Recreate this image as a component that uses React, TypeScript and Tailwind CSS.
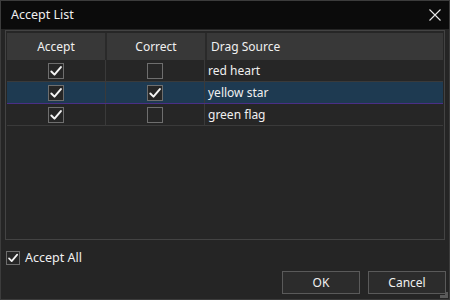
import React, { useState } from 'react';

const Check = ({ on, size = 16 }: { on: boolean; size?: number }) => (
  <span
    className="flex items-center justify-center border border-[#6e6e6e] bg-[#262626]"
    style={{ width: size, height: size }}
  >
    {on && (
      <svg width={size - 2} height={size - 2} viewBox="0 0 12 12" fill="none">
        <path d="M2 6.4 L4.7 9.1 L10.2 2.6" stroke="#f4f4f4" strokeWidth="1.7" strokeLinecap="round" strokeLinejoin="round" />
      </svg>
    )}
  </span>
);

const rows = [
  { accept: true, correct: false, name: 'red heart' },
  { accept: true, correct: true, name: 'yellow star' },
  { accept: true, correct: false, name: 'green flag' },
];

export default function App() {
  const [selected] = useState(1);

  return (
    <div className="relative w-[450px] h-[300px] flex flex-col border border-[#3c3c3c] bg-[#252525] text-[#f0f0f0] text-[12px] leading-none overflow-hidden" style={{ fontFamily: '"Noto Sans", "Open Sans", sans-serif' }}>
      {/* title bar */}
      <div className="h-[28px] bg-[#0b0b0b] flex items-center justify-between pl-[10px] pr-[8px] shrink-0">
        <span className="text-[12.5px]">Accept List</span>
        <svg width="12" height="12" viewBox="0 0 12 12">
          <path d="M0.5 0.5 L11.5 11.5 M11.5 0.5 L0.5 11.5" stroke="#e8e8e8" strokeWidth="1.1" />
        </svg>
      </div>

      <div className="flex-1 flex flex-col px-[4px] pt-[1px]">
        {/* table */}
        <div className="h-[210px] border border-[#434343] bg-[#262626] p-[1px] flex flex-col">
          <div className="grid grid-cols-[98px_98px_1fr] h-[27px] mt-[1px] gap-x-[2px] bg-[#2a2a2a]">
            <div className="bg-[#383838] flex items-center justify-center">Accept</div>
            <div className="bg-[#383838] flex items-center justify-center">Correct</div>
            <div className="bg-[#383838] flex items-center pl-[4px]">Drag Source</div>
          </div>
          {rows.map((r, i) => (
            <div
              key={r.name}
              className={`grid grid-cols-[99px_99px_1fr] h-[22px] border-b ${i === selected ? 'bg-[#1e3a51] border-[#4a2f86]' : 'border-[#3a3a3a]'}`}
            >
              <div className="flex items-center justify-center border-r border-[#3a3a3a]">
                <Check on={r.accept} />
              </div>
              <div className="flex items-center justify-center border-r border-[#3a3a3a]">
                <Check on={r.correct} />
              </div>
              <div className="flex items-center pl-[3px]">{r.name}</div>
            </div>
          ))}
        </div>

        {/* accept all */}
        <div className="flex items-center gap-[5px] mt-[11px] ml-[1px] h-[14px]">
          <Check on size={14} />
          <span className="text-[12.5px]">Accept All</span>
        </div>

        {/* buttons */}
        <div className="flex justify-end gap-[8px] mt-[6px] mr-[-1px]">
          <button className="w-[78px] h-[23px] border border-[#5a5a5a] bg-[#2c2c2c] text-[#f0f0f0]">OK</button>
          <button className="w-[78px] h-[23px] border border-[#5a5a5a] bg-[#2c2c2c] text-[#f0f0f0]">Cancel</button>
        </div>
      </div>

      {/* resize grip */}
      <svg className="absolute right-[1px] bottom-[1px]" width="8" height="6" viewBox="0 0 8 6">
        <path d="M5 0 H8 V6 H0 V3 H5 Z" fill="#5a5a5a" />
      </svg>
    </div>
  );
}
